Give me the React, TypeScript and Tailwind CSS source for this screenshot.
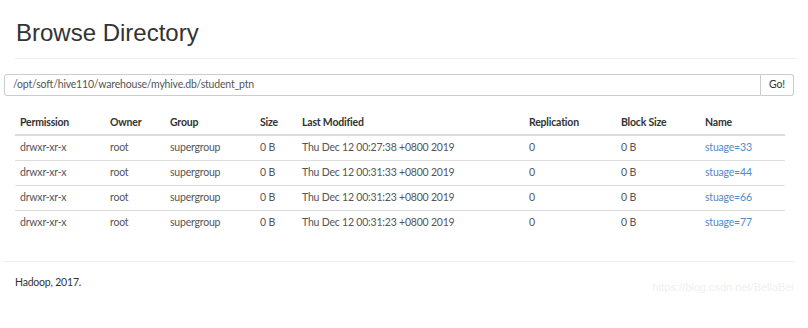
import React from "react";

const rows = [
  { time: "Thu Dec 12 00:27:38 +0800 2019", name: "stuage=33" },
  { time: "Thu Dec 12 00:31:33 +0800 2019", name: "stuage=44" },
  { time: "Thu Dec 12 00:31:23 +0800 2019", name: "stuage=66" },
  { time: "Thu Dec 12 00:31:23 +0800 2019", name: "stuage=77" },
];

const headers = ["Permission", "Owner", "Group", "Size", "Last Modified", "Replication", "Block Size", "Name"];
const widths = [90, 60, 90, 42, 227, 92, 84, 85];

export default function App() {
  return (
    <div className="relative w-[808px] h-[328px] bg-white overflow-hidden font-['Lato','Open_Sans',sans-serif] text-[10.5px] tracking-[-0.2px] text-[#555]">
      <div className="px-[15px] pt-[19px]">
        <h1 className="font-['Liberation_Sans',Arial,sans-serif] text-[24px] leading-[28px] tracking-normal text-[#333] pl-px">
          Browse Directory
        </h1>
        <div className="mt-[11px] border-t border-[#eee] w-[782px]" />
      </div>

      <div className="mt-[15px] ml-[4px] flex w-[790px] h-[22px]">
        <div className="flex-1 flex items-center border border-[#ccc] rounded-l-[3px] pl-[8px] text-[#555]">
          /opt/soft/hive110/warehouse/myhive.db/student_ptn
        </div>
        <div className="w-[33px] flex items-center justify-center border border-l-0 border-[#ccc] rounded-r-[3px] text-[#333]">
          Go!
        </div>
      </div>

      <table className="mt-[15px] ml-[15px] w-[770px] table-fixed border-collapse">
        <colgroup>
          {widths.map((w, i) => (
            <col key={i} style={{ width: w }} />
          ))}
        </colgroup>
        <thead>
          <tr className="h-[24px] border-b-2 border-[#ddd]">
            {headers.map((h) => (
              <th key={h} className="text-left font-bold text-[#333] pl-[5px] whitespace-nowrap">
                {h}
              </th>
            ))}
          </tr>
        </thead>
        <tbody>
          {rows.map((r, i) => (
            <tr key={i} className={`h-[25px] ${i < rows.length - 1 ? "border-b border-[#ddd]" : ""}`}>
              <td className="pl-[5px]">drwxr-xr-x</td>
              <td className="pl-[5px]">root</td>
              <td className="pl-[5px]">supergroup</td>
              <td className="pl-[5px]">0 B</td>
              <td className="pl-[5px] whitespace-nowrap">{r.time}</td>
              <td className="pl-[5px]">0</td>
              <td className="pl-[5px]">0 B</td>
              <td className="pl-[5px] text-[#4f8ac9]">{r.name}</td>
            </tr>
          ))}
        </tbody>
      </table>

      <div className="mt-[26px] ml-[3px] w-[792px] border-t border-[#eee]" />
      <div className="pl-[15px] pt-[13px] text-[#333]">Hadoop, 2017.</div>

      <div className="absolute right-[14px] top-[279px] font-['Liberation_Sans',Arial,sans-serif] text-[11px] tracking-normal text-[#f0f0f0]">
        https://blog.csdn.net/BellaBei
      </div>
    </div>
  );
}
